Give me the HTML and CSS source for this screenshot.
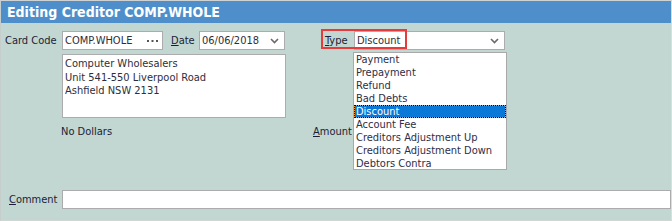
FILE: index.html
```html
<!DOCTYPE html>
<html>
<head>
<meta charset="utf-8">
<link rel="stylesheet" href="styles.css">
</head>
<body>
<div class="window">
  <div class="titlebar">Editing Creditor COMP.WHOLE</div>
  <div class="form">
    <div class="row row1">
      <span class="label lbl-card">Card Code</span>
      <div class="field f-card"><span class="val">COMP.WHOLE</span>
        <svg class="dots" width="11" height="2" viewBox="0 0 11 2"><rect x="0" y="0" width="2" height="2" fill="#555"/><rect x="4.5" y="0" width="2" height="2" fill="#555"/><rect x="9" y="0" width="2" height="2" fill="#555"/></svg>
      </div>
      <span class="label lbl-date"><u>D</u>ate</span>
      <div class="field f-date"><span class="val">06/06/2018</span>
        <svg class="chev" width="9" height="6" viewBox="0 0 9 6"><path d="M1 1 L4.5 4.5 L8 1" fill="none" stroke="#6a6a6a" stroke-width="1.6"/></svg>
      </div>
      <span class="label lbl-type"><u>T</u>ype</span>
      <div class="field f-type"><span class="val">Discount</span>
        <svg class="chev" width="9" height="6" viewBox="0 0 9 6"><path d="M1 1 L4.5 4.5 L8 1" fill="none" stroke="#6a6a6a" stroke-width="1.6"/></svg>
      </div>
    </div>
    <div class="row row2">
      <div class="address">Computer Wholesalers<br>Unit 541-550 Liverpool Road<br>Ashfield NSW 2131</div>
    </div>
    <div class="row row3">
      <span class="nodollars">No Dollars</span>
      <span class="label lbl-amount"><u>A</u>mount</span>
    </div>
    <div class="row row4">
      <span class="label lbl-comment"><u>C</u>omment</span>
      <div class="field f-comment"></div>
    </div>

    <ul class="droplist">
      <li>Payment</li>
      <li>Prepayment</li>
      <li>Refund</li>
      <li>Bad Debts</li>
      <li class="sel">Discount</li>
      <li>Account Fee</li>
      <li>Creditors Adjustment Up</li>
      <li>Creditors Adjustment Down</li>
      <li>Debtors Contra</li>
    </ul>
  </div>
  <div class="highlight"></div>
</div>
</body>
</html>
```

FILE: styles.css
```css
html, body {
  margin: 0;
  padding: 0;
  background: #c2d7d1;
}
body {
  font-family: "DejaVu Sans Condensed", "DejaVu Sans", sans-serif;
  font-size: 11px;
  color: #1c1c36;
}
.window {
  position: relative;
  width: 672px;
  height: 221px;
  box-sizing: border-box;
  border-top: 1px solid #cfd2d2;
  border-left: 1px solid #c6cdcb;
  border-right: 1px solid #dadedd;
  border-bottom: 1px solid #cfd6d4;
  background: #c2d7d1;
  overflow: hidden;
}
.titlebar {
  height: 22px;
  line-height: 22px;
  background: #4e8fcb;
  color: #ffffff;
  font-weight: bold;
  font-size: 14px;
  padding-left: 6px;
}
.form {
  padding-left: 4px;
}
.row {
  display: flex;
  align-items: center;
}
.row1 {
  margin-top: 8px;
  height: 19px;
}
.label {
  line-height: 13px;
  white-space: nowrap;
}
.label u {
  text-decoration: underline;
  text-underline-offset: 1px;
}
.lbl-card { width: 57px; }
.lbl-date { width: 28px; margin-left: 8px; }
.lbl-type { width: 29px; margin-left: 40px; }
.field {
  box-sizing: border-box;
  height: 19px;
  background: #ffffff;
  border: 1px solid #acacac;
  display: flex;
  align-items: center;
  padding-left: 2px;
  padding-right: 6px;
  color: #2e2e3a;
}
.field .val {
  flex: 1;
  white-space: nowrap;
  font-size: 11px;
}
.f-card { width: 101px; }
.f-date { width: 86px; }
.f-type { width: 151px; }
.dots { margin-right: -2px; }
.chev { margin-right: -1px; }
.row2 {
  margin-top: 4px;
}
.address {
  box-sizing: border-box;
  margin-left: 57px;
  width: 224px;
  height: 64px;
  background: #ffffff;
  border: 1px solid #acacac;
  padding: 2px 0 0 2px;
  line-height: 13.5px;
  font-size: 11px;
  color: #2e2e3a;
}
.row3 {
  margin-top: 7px;
  height: 13px;
}
.nodollars {
  margin-left: 56px;
  width: 252px;
  line-height: 13px;
}
.row4 {
  margin-top: 52px;
  height: 19px;
}
.lbl-comment {
  width: 53px;
  padding-left: 4px;
}
.f-comment {
  width: 609px;
}
.droplist {
  position: absolute;
  left: 352px;
  top: 51px;
  width: 154px;
  height: 118px;
  box-sizing: border-box;
  margin: 0;
  padding: 0;
  list-style: none;
  background: #ffffff;
  border: 1px solid #a9a9a9;
  color: #2e2e48;
  font-size: 11px;
}
.droplist li {
  height: 13px;
  line-height: 13px;
  padding-left: 2px;
  white-space: nowrap;
  box-sizing: border-box;
}
.droplist li.sel {
  background: #0a78d7;
  color: #ffffff;
  border: 1px solid #ff9a1f;
  outline: 1px dotted #000000;
  outline-offset: -1px;
  padding-left: 1px;
  line-height: 11px;
}
.highlight {
  position: absolute;
  left: 320px;
  top: 28px;
  width: 86px;
  height: 20px;
  box-sizing: border-box;
  border: 2px solid #e53b3d;
}
```
